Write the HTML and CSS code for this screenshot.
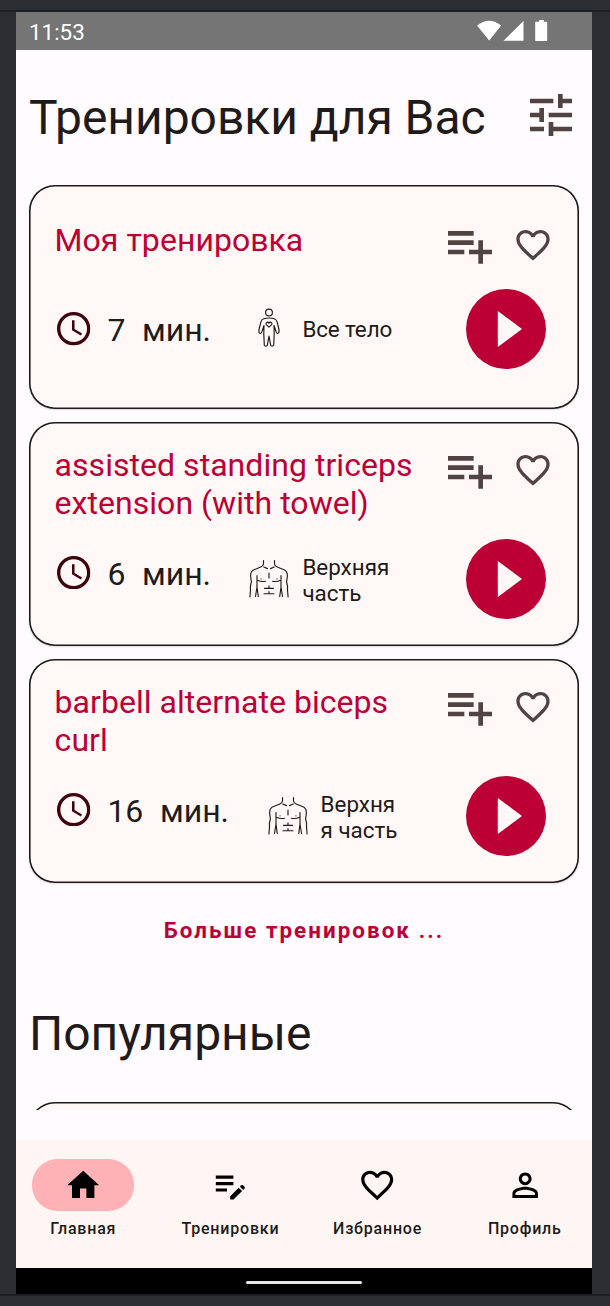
FILE: index.html
```html
<!DOCTYPE html>
<html lang="ru">
<head>
<meta charset="utf-8">
<title>Тренировки</title>
<link rel="stylesheet" href="styles.css">
</head>
<body>
<svg class="sprite" aria-hidden="true">
  <symbol id="tune" viewBox="3 3 18 18"><path d="M3 17v2h6v-2H3zM3 5v2h10V5H3zm10 16v-2h8v-2h-8v-2h-2v6h2zM7 9v2H3v2h4v2h2V9H7zm14 4v-2H11v2h10zm-6-4h2V7h4V5h-4V3h-2v6z"/></symbol>
  <symbol id="playlist" viewBox="3 3.43 19 17.14"><path d="M14 10H3v2h11v-2zm0-4H3v2h11V6zm4 8v-4h-2v4h-4v2h4v4h2v-4h4v-2h-4zM3 16h7v-2H3v2z"/></symbol>
  <symbol id="heart" viewBox="0 0 24 24"><path d="M16.5 3c-1.74 0-3.41.81-4.5 2.09C10.91 3.81 9.24 3 7.5 3 4.42 3 2 5.42 2 8.5c0 3.78 3.4 6.86 8.55 11.54L12 21.35l1.45-1.32C18.6 15.36 22 12.28 22 8.5 22 5.42 19.58 3 16.5 3zm-4.4 15.55l-.1.1-.1-.1C7.14 14.24 4 11.39 4 8.5 4 6.5 5.5 5 7.5 5c1.54 0 3.04.99 3.57 2.36h1.87C13.46 5.99 14.96 5 16.5 5c2 0 3.5 1.5 3.5 3.5 0 2.89-3.14 5.74-7.9 10.05z"/></symbol>
  <symbol id="clock" viewBox="2 2 20 20"><path d="M11.99 2C6.47 2 2 6.48 2 12s4.47 10 9.99 10C17.52 22 22 17.52 22 12S17.52 2 11.99 2zM12 20c-4.42 0-8-3.58-8-8s3.58-8 8-8 8 3.58 8 8-3.58 8-8 8zm.5-13H11v6l5.25 3.15.75-1.23-4.5-2.67z"/></symbol>
  <symbol id="play" viewBox="0 0 80 80"><path d="M31.8 22v36L56 40z"/></symbol>
  <symbol id="body" viewBox="0 0 40 40"><g fill="none" stroke="#201a1a" stroke-width="1.15" stroke-linecap="round" stroke-linejoin="round">
    <circle cx="20" cy="4.5" r="3.4"/>
    <path d="M14.8 10.8Q20 9.2 25.2 10.8Q27.6 11.5 28.2 14.3L30.1 22Q30.4 25 28.6 25.5Q27.4 25.4 27 23.5L25 17.5L25.2 26L24.7 37.2Q23.5 39 21.7 37.4L20 28L18.3 37.4Q16.5 39 15.3 37.2L14.8 26L15 17.5L13 23.5Q12.6 25.4 11.4 25.5Q9.6 25 9.9 22L11.8 14.3Q12.4 11.5 14.8 10.8Z"/>
    <path d="M20 19.2L17.3 16.7Q16.5 14.8 18.2 14.2Q19.5 14.1 20 15.3Q20.5 14.1 21.8 14.2Q23.5 14.8 22.7 16.7Z"/></g></symbol>
  <symbol id="torso" viewBox="0 0 40 40"><g fill="none" stroke="#201a1a" stroke-width="1.15" stroke-linecap="round" stroke-linejoin="round">
    <path d="M14.5 1.5V5Q14.3 7.2 11.8 8L5 10.8Q1.6 12.2 1.6 17L2.4 23Q1 27 1.5 31L.9 38"/>
    <path d="M25.5 1.5V5Q25.7 7.2 28.2 8L35 10.8Q38.4 12.2 38.4 17L37.6 23Q39 27 38.5 31L39.1 38"/>
    <path d="M14.8 8L18.5 9.6M25.2 8L21.5 9.6M20 14V19M8 16.5V28L9.3 37.5M8 28L6.5 37.5M32 16.5V28L30.7 37.5M32 28L33.5 37.5M9 21.5Q12 23 16.5 22.3M31 21.5Q28 23 23.5 22.3M12 19.8H12.1M28 19.8H27.9M15.5 29.3H24.5M20 26.7V29M15 34.7H25M20 32.5V34.7"/></g></symbol>
  <symbol id="home" viewBox="0 0 24 24"><path d="M10 20v-6h4v6h5v-8h3L12 3 2 12h3v8z"/></symbol>
  <symbol id="note" viewBox="0 0 24 24"><path d="M3 10h11v2H3v-2zm0-2h11V6H3v2zm0 8h7v-2H3v2zm15.01-3.13.71-.71c.39-.39 1.02-.39 1.41 0l.71.71c.39.39.39 1.02 0 1.41l-.71.71-2.12-2.12zm-.71.71-5.3 5.3V21h2.12l5.3-5.3-2.12-2.12z"/></symbol>
  <symbol id="person" viewBox="0 0 24 24"><path d="M12 5.9c1.16 0 2.1.94 2.1 2.1s-.94 2.1-2.1 2.1S9.9 9.16 9.9 8s.94-2.1 2.1-2.1m0 9c2.97 0 6.1 1.46 6.1 2.1v1.1H5.9V17c0-.64 3.13-2.1 6.1-2.1M12 4C9.79 4 8 5.79 8 8s1.79 4 4 4 4-1.79 4-4-1.79-4-4-4zm0 9c-2.67 0-8 1.34-8 4v3h16v-3c0-2.66-5.33-4-8-4z"/></symbol>
</svg>
<div class="phone">
  <div class="status">
    <span class="status-time">11:53</span>
    <svg class="status-icons" viewBox="0 0 72 22"><path d="M0 5.6Q12.3-4.2 24.2 5.6L12.2 20.5ZM26.5 20.8L46.5 1V20.8ZM59.5 1.8H62.2V0H66.8V1.8H69.5Q70.2 1.8 70.2 2.5V20.2Q70.2 21 69.5 21H59Q58.2 21 58.2 20.2V2.5Q58.2 1.8 59 1.8Z"/></svg>
  </div>
  <main class="content">
    <header class="head">
      <h1 class="heading">Тренировки для Вас</h1>
      <svg class="tune"><use href="#tune"/></svg>
    </header>
    <section class="cards">
      <article class="card card-single">
        <div class="card-head">
          <h2 class="title">Моя тренировка</h2>
          <div class="actions"><svg class="add"><use href="#playlist"/></svg><svg class="fav"><use href="#heart"/></svg></div>
        </div>
        <div class="info">
          <svg class="clock"><use href="#clock"/></svg>
          <span class="time"><span>7</span><span>мин.</span></span>
          <svg class="part-icon"><use href="#body"/></svg>
          <span class="part">Все тело</span>
          <button class="play"><svg><use href="#play"/></svg></button>
        </div>
      </article>
      <article class="card">
        <div class="card-head">
          <h2 class="title">assisted standing triceps<br>extension (with towel)</h2>
          <div class="actions"><svg class="add"><use href="#playlist"/></svg><svg class="fav"><use href="#heart"/></svg></div>
        </div>
        <div class="info">
          <svg class="clock"><use href="#clock"/></svg>
          <span class="time"><span>6</span><span>мин.</span></span>
          <svg class="part-icon"><use href="#torso"/></svg>
          <span class="part">Верхняя<br>часть</span>
          <button class="play"><svg><use href="#play"/></svg></button>
        </div>
      </article>
      <article class="card">
        <div class="card-head">
          <h2 class="title">barbell alternate biceps<br>curl</h2>
          <div class="actions"><svg class="add"><use href="#playlist"/></svg><svg class="fav"><use href="#heart"/></svg></div>
        </div>
        <div class="info">
          <svg class="clock"><use href="#clock"/></svg>
          <span class="time time-wide"><span>16</span><span>мин.</span></span>
          <svg class="part-icon"><use href="#torso"/></svg>
          <span class="part">Верхня<br>я часть</span>
          <button class="play"><svg><use href="#play"/></svg></button>
        </div>
      </article>
    </section>
    <div class="more">Больше тренировок ...</div>
    <h1 class="heading popular">Популярные</h1>
    <div class="peek"><div class="card"></div></div>
  </main>
  <nav class="nav">
    <div class="nav-item"><span class="pill active"><svg><use href="#home"/></svg></span><span class="nav-label">Главная</span></div>
    <div class="nav-item"><span class="pill"><svg><use href="#note"/></svg></span><span class="nav-label">Тренировки</span></div>
    <div class="nav-item"><span class="pill"><svg><use href="#heart"/></svg></span><span class="nav-label">Избранное</span></div>
    <div class="nav-item"><span class="pill"><svg><use href="#person"/></svg></span><span class="nav-label">Профиль</span></div>
  </nav>
  <div class="gesture"><span></span></div>
</div>
</body>
</html>
```
FILE: styles.css
```css
* { box-sizing: border-box; }
body {
  margin: 0;
  height: 1306px;
  padding: 10px 0;
  overflow: hidden;
  background: #2b2d30;
  font-family: Roboto, "Noto Sans", sans-serif;
  color: #201a1a;
}
h1, h2 { margin: 0; font-weight: 400; }
svg { display: block; flex: none; }
.sprite { position: absolute; width: 0; height: 0; }
.phone {
  height: 1286px;
  border-top: 2px solid #1e1f22;
  border-bottom: 2px solid #1e1f22;
  padding: 0 18px 0 16px;
  display: flex;
  flex-direction: column;
}
.status {
  height: 38.4px;
  flex: none;
  padding: 0 43px 0 13px;
  background: #757575;
  display: flex;
  align-items: center;
  justify-content: space-between;
}
.status-time { color: #fff; font-size: 22.4px; line-height: 26px; padding-top: 2px; }
.status-icons { width: 72px; height: 22px; fill: #fff; }
.content { flex: 1; min-height: 0; background: #fffbff; padding: 0 13px; }
.head {
  height: 134.8px;
  padding: 40px 7.2px 0 0;
  display: flex;
  justify-content: space-between;
  align-items: flex-start;
}
.heading { font-size: 48px; line-height: 56.25px; letter-spacing: -.04px; white-space: nowrap; }
.tune { width: 42px; height: 42px; margin-top: 3.6px; fill: #524343; }
.cards { display: grid; gap: 12.8px; }
.card {
  height: 224.2px;
  border-radius: 25.6px;
  padding: 24.9px 29px 0 25.6px;
  background: #fff8f6;
  box-shadow: inset 0 0 0 1.6px #201a1a, 0 1px 2px rgba(0, 0, 0, .14);
}
.card-head { display: flex; justify-content: space-between; }
.title { color: #bc0036; font-size: 32px; line-height: 37.5px; letter-spacing: .04px; white-space: nowrap; }
.actions { display: flex; gap: 21.1px; padding-top: 3.4px; fill: #524343; height: 0; margin-right: -3.4px; }
.add { width: 44.33px; height: 40px; }
.fav { width: 40px; height: 40px; }
.info { height: 80px; margin-top: 16.8px; display: flex; align-items: center; }
.clock { width: 33.4px; height: 33.4px; margin: 0 0 12.2px 2.9px; fill: #40000c; }
.time {
  width: 134px;
  margin: 0 0 8.8px 16.5px;
  display: flex;
  gap: 16.6px;
  font-size: 32px;
  line-height: 37.5px;
  letter-spacing: 0;
}
.time-wide { width: 152.2px; }
.part-icon { width: 40px; height: 40px; margin-left: 8px; }
.part { font-size: 22.4px; line-height: 26.25px; margin-left: 13px; padding-top: 2.8px; white-space: nowrap; }
.play {
  width: 80px;
  height: 80px;
  margin: 0 4.1px 0 auto;
  padding: 0;
  border: 0;
  border-radius: 50%;
  background: #bc0036;
  fill: #fff8f6;
}
.play svg { width: 80px; height: 80px; }
.card-single { padding-top: 36.9px; }
.card-single .info { margin-top: 29.6px; }
.card-single .clock { margin-bottom: 0; }
.card-single .time { margin-bottom: -4px; }
.card-single .part-icon { margin-top: -1.5px; }
.card-single .part { padding-top: 0; letter-spacing: -.1px; }
.more {
  margin-top: 33.4px;
  color: #bc0036;
  font-size: 22.4px;
  font-weight: 700;
  line-height: 26.25px;
  letter-spacing: 2.05px;
  text-align: center;
}
.popular { margin-top: 62.8px; letter-spacing: 0; }
.peek { margin-top: 40px; height: 8px; overflow: hidden; }
.nav {
  height: 128px;
  flex: none;
  padding-top: 19.4px;
  background: #fff6f4;
  display: grid;
  grid-template-columns: repeat(4, 1fr);
  column-gap: 12.8px;
}
.nav-item { display: flex; flex-direction: column; align-items: center; }
.pill { width: 102.4px; height: 51.2px; border-radius: 25.6px; display: grid; place-items: center; }
.pill svg { width: 38.4px; height: 38.4px; }
.active { background: #ffb2b6; }
.nav-label { margin-top: 7.2px; font-size: 16px; line-height: 22px; font-weight: 500; letter-spacing: .8px; }
.gesture { height: 26px; flex: none; background: #000; display: grid; place-items: center; padding-top: 3px; }
.gesture span { width: 116px; height: 3.5px; border-radius: 2px; background: #e6e6e6; }
```
